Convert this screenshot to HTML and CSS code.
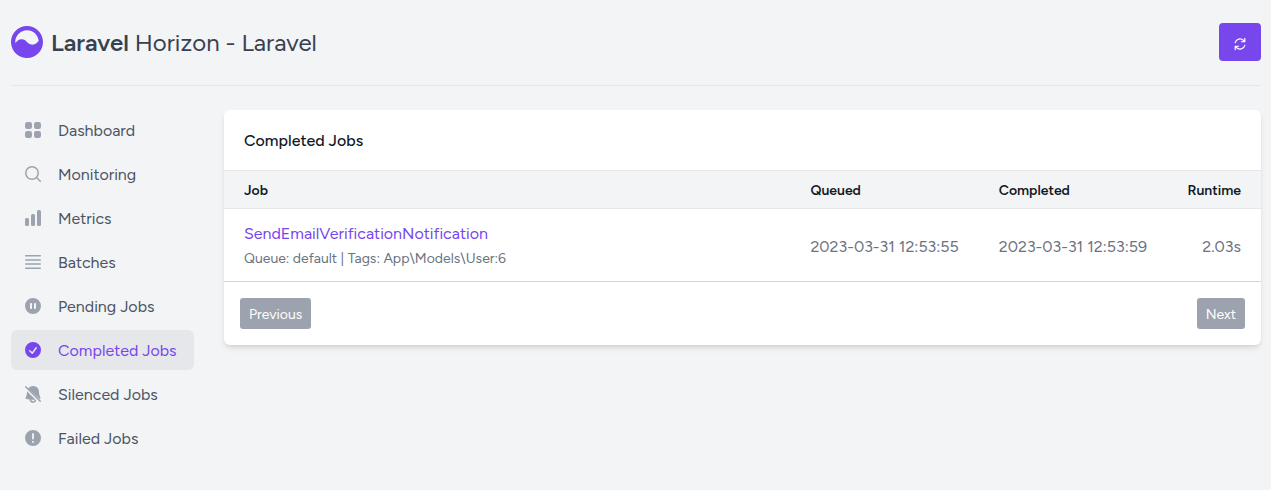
FILE: index.html
```html
<!DOCTYPE html>
<html lang="en">
<head>
<meta charset="utf-8">
<meta name="viewport" content="width=device-width, initial-scale=1">
<title>Horizon - Completed Jobs</title>
<link rel="stylesheet" href="styles.css">
</head>
<body>
<div class="container">
  <header class="header">
    <svg class="logo" viewBox="0 0 30 30" aria-hidden="true"><path d="M5.26176342 26.4094389C2.04147988 23.6582233 0 19.5675182 0 15c0-4.1421356 1.67893219-7.89213562 4.39339828-10.60660172C7.10786438 1.67893219 10.8578644 0 15 0c8.2842712 0 15 6.71572875 15 15 0 8.2842712-6.7157288 15-15 15-3.716753 0-7.11777662-1.3517984-9.73823658-3.5905611zM4.03811305 15.9222506C5.70084247 14.4569342 6.87195416 12.5 10 12.5c5 0 5 5 10 5 3.1280454 0 4.2991572-1.9569336 5.961887-3.4222502C25.4934253 8.43417206 20.7645408 4 15 4 8.92486775 4 4 8.92486775 4 15c0 .3105915.01287248.6181765.03811305.9222506z"/></svg>
    <h1 class="title"><strong>Laravel</strong> Horizon - Laravel</h1>
    <button class="refresh" type="button" aria-label="Auto load new entries">
      <svg viewBox="0 0 20 20" aria-hidden="true"><path d="M15.312 11.424a5.5 5.5 0 01-9.201 2.466l-.312-.311h2.433a.75.75 0 000-1.5H3.989a.75.75 0 00-.75.75v4.242a.75.75 0 001.5 0v-2.43l.31.31a7 7 0 0011.712-3.138.75.75 0 00-1.449-.39zm1.23-3.723a.75.75 0 00.219-.53V2.929a.75.75 0 00-1.5 0V5.36l-.31-.31A7 7 0 003.239 8.188a.75.75 0 101.448.389A5.5 5.5 0 0113.89 6.11l.311.31h-2.432a.75.75 0 000 1.5h4.243a.75.75 0 00.53-.219z"/></svg>
    </button>
  </header>
  <div class="layout">
    <nav class="sidebar">
      <a class="nav-link" href="#dashboard"><svg viewBox="0 0 20 20"><rect x="2" y="2" width="7" height="7" rx="2.2"/><rect x="11" y="2" width="7" height="7" rx="2.2"/><rect x="2" y="11" width="7" height="7" rx="2.2"/><rect x="11" y="11" width="7" height="7" rx="2.2"/></svg>Dashboard</a>
      <a class="nav-link" href="#monitoring"><svg viewBox="0 0 20 20"><path class="line" d="M13.5 13.5l3.8 3.8M15.25 9a6.25 6.25 0 1 1-12.5 0a6.25 6.25 0 0 1 12.5 0z"/></svg>Monitoring</a>
      <a class="nav-link" href="#metrics"><svg viewBox="0 0 20 20"><rect x="14" y="2" width="4" height="16" rx="1.5"/><rect x="8" y="6" width="4" height="12" rx="1.5"/><rect x="2" y="10" width="4" height="8" rx="1.5"/></svg>Metrics</a>
      <a class="nav-link" href="#batches"><svg viewBox="0 0 20 20"><path class="line" d="M2.75 3.75h14.5M2.75 8h14.5M2.75 12h14.5M2.75 16.25h14.5"/></svg>Batches</a>
      <a class="nav-link" href="#pending"><svg viewBox="0 0 20 20"><path fill-rule="evenodd" d="M2 10a8 8 0 1 1 16 0a8 8 0 0 1-16 0zM7.75 7a.75.75 0 0 0-.75.75v4.5c0 .41.34.75.75.75h.5a.75.75 0 0 0 .75-.75v-4.5A.75.75 0 0 0 8.25 7zM11.75 7a.75.75 0 0 0-.75.75v4.5c0 .41.34.75.75.75h.5a.75.75 0 0 0 .75-.75v-4.5a.75.75 0 0 0-.75-.75z"/></svg>Pending Jobs</a>
      <a class="nav-link active" href="#completed" aria-current="page"><svg viewBox="0 0 20 20"><path fill-rule="evenodd" d="M10 18a8 8 0 1 0 0-16a8 8 0 0 0 0 16zm3.857-9.809a.75.75 0 0 0-1.214-.882l-3.483 4.79-1.88-1.88a.75.75 0 1 0-1.06 1.061l2.5 2.5a.75.75 0 0 0 1.137-.089z"/></svg>Completed Jobs</a>
      <a class="nav-link" href="#silenced"><svg viewBox="0 0 20 20"><path d="M4 8c0-.26.02-.52.05-.77l9.25 9.25a3.5 3.5 0 0 1-6.79-.95c-1.2-.14-2.36-.36-3.5-.66a.75.75 0 0 1-.46-1.08A11 11 0 0 0 4 8zM16 8c0 1.89.5 3.66 1.45 5.76.21.42 0 .92-.46 1.1l-.4.1L5.1 4.55A6 6 0 0 1 16 8z"/><path class="cutout" d="M8.1 15.7a2 2 0 0 0 3.85 0 33 33 0 0 1-3.85 0z"/><path class="line" d="M2.75 2.75l14.5 14.5"/></svg>Silenced Jobs</a>
      <a class="nav-link" href="#failed"><svg viewBox="0 0 20 20"><path fill-rule="evenodd" d="M18 10a8 8 0 1 1-16 0a8 8 0 0 1 16 0zM10 5a.9.9 0 0 0-.9.9v4.6a.9.9 0 0 0 1.8 0V5.900A.9.9 0 0 0 10 5zm0 10a1 1 0 1 0 0-2a1 1 0 0 0 0 2z"/></svg>Failed Jobs</a>
    </nav>
    <main class="card">
      <h2 class="card-title">Completed Jobs</h2>
      <table class="jobs">
        <thead>
          <tr><th scope="col">Job</th><th scope="col" class="time">Queued</th><th scope="col" class="time">Completed</th><th scope="col" class="runtime">Runtime</th></tr>
        </thead>
        <tbody>
          <tr>
            <td><a class="job-link" href="#job">SendEmailVerificationNotification</a><small class="meta">Queue: default | Tags: App\Models\User:6</small></td>
            <td>2023-03-31 12:53:55</td>
            <td>2023-03-31 12:53:59</td>
            <td class="runtime">2.03s</td>
          </tr>
        </tbody>
      </table>
      <div class="pager">
        <button type="button" disabled>Previous</button>
        <button type="button" disabled>Next</button>
      </div>
    </main>
  </div>
</div>
</body>
</html>
```
FILE: styles.css
```css
* { box-sizing: border-box; }

body {
  margin: 0;
  background: #f3f4f6;
  color: #111827;
  font-family: Figtree, Inter, sans-serif;
  font-size: 16px;
  line-height: 24px;
}

.container { padding: 0 10px 24px 11px; }

.header {
  display: flex;
  align-items: center;
  gap: 8px;
  padding: 23px 0 24px;
  border-bottom: 1px solid #e5e7eb;
}

.logo {
  width: 32px;
  height: 32px;
  fill: #7746ec;
}

.title {
  margin: 0;
  padding-top: 2px;
  color: #374151;
  font-size: 24px;
  font-weight: 400;
  line-height: 36px;
}

.title strong { font-weight: 600; }

.refresh {
  display: flex;
  align-items: center;
  justify-content: center;
  width: 42px;
  height: 38px;
  margin-left: auto;
  padding: 4px 0 0;
  border: 0;
  border-radius: 4px;
  background: #7746ec;
}

.refresh svg {
  width: 16px;
  height: 16px;
  fill: #fff;
}

.layout {
  display: grid;
  grid-template-columns: 183px minmax(0, 1fr);
  align-items: start;
  gap: 30px;
  padding-top: 24px;
}

.sidebar {
  display: grid;
  gap: 4px;
}

.nav-link {
  display: flex;
  align-items: center;
  gap: 15px;
  padding: 9px 12px 7px;
  border-radius: 6px;
  color: #4b5563;
  text-decoration: none;
  white-space: nowrap;
}

.nav-link svg {
  flex: none;
  width: 20px;
  height: 20px;
  margin-bottom: 2px;
  fill: #9ca3af;
  stroke: none;
}

.nav-link .line {
  fill: none;
  stroke: #9ca3af;
  stroke-width: 1.5;
  stroke-linecap: round;
}

.nav-link .cutout { fill: #f3f4f6; }

.nav-link.active {
  background: #e5e7eb;
  color: #7746ec;
}

.nav-link.active svg { fill: #7746ec; }

.card {
  overflow: hidden;
  border-radius: 6px;
  background: #fff;
  box-shadow: 0 4px 6px -1px rgba(0, 0, 0, .1), 0 2px 4px -2px rgba(0, 0, 0, .1);
}

.card-title {
  margin: 0;
  padding: 19px 20px 17px;
  font-size: 16px;
  font-weight: 500;
  line-height: 24px;
}

.jobs {
  width: 100%;
  border-spacing: 0;
}

.jobs th {
  padding: 9px 20px 7px;
  border-top: 1px solid #e5e7eb;
  border-bottom: 1px solid #e5e7eb;
  background: #f3f4f6;
  font-size: 14px;
  font-weight: 600;
  line-height: 21px;
  text-align: left;
}

.jobs td {
  padding: 13px 20px 10px;
  border-bottom: 1px solid #d1d5db;
  color: #6b7280;
  white-space: nowrap;
}

.jobs .time { width: 188px; }

.jobs .runtime {
  width: 94px;
  text-align: right;
}

.job-link {
  display: block;
  color: #7746ec;
  text-decoration: none;
}

.meta {
  display: block;
  margin-top: 1px;
  font-size: 14px;
}

.pager {
  display: flex;
  justify-content: space-between;
  padding: 16px;
}

.pager button {
  padding: 6px 9px 4px;
  border: 0;
  border-radius: 3px;
  background: #9ca3af;
  color: #fff;
  font-family: inherit;
  font-size: 14px;
  line-height: 21px;
}
```
